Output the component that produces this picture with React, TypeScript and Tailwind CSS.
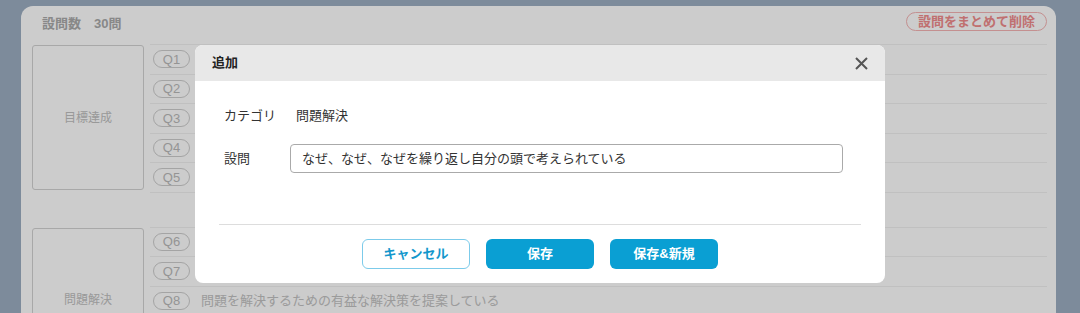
import React from 'react';

type Question = { no: string; text: string };
type Group = { category: string; questions: Question[] };

const groups: Group[] = [
  {
    category: '目標達成',
    questions: [
      { no: 'Q1', text: '目標を明確にし、達成までの計画を立てている' },
      { no: 'Q2', text: '目標達成のために必要な行動を継続している' },
      { no: 'Q3', text: '困難な状況でも最後までやり抜いている' },
      { no: 'Q4', text: '進捗を定期的に確認し、計画を修正している' },
      { no: 'Q5', text: '高い目標に対して主体的に取り組んでいる' },
    ],
  },
  {
    category: '問題解決',
    questions: [
      { no: 'Q6', text: '問題の本質を捉えて原因を分析している' },
      { no: 'Q7', text: 'なぜ、なぜ、なぜを繰り返し自分の頭で考えている' },
      { no: 'Q8', text: '問題を解決するための有益な解決策を提案している' },
      { no: 'Q9', text: '解決策を実行し、その結果を検証している' },
      { no: 'Q10', text: '関係者を巻き込みながら問題解決を進めている' },
    ],
  },
];

const font = "font-['Liberation_Sans','Noto_Sans_CJK_JP',sans-serif]";

const QuestionGroup: React.FC<{ group: Group }> = ({ group }) => (
  <div className="flex">
    <div className="mt-[1px] flex h-[145px] w-[112px] shrink-0 items-center justify-center rounded-[3px] border border-[#d2d2d2] text-[12px] text-[#c0c0c0]">
      {group.category}
    </div>
    <div className="ml-[6px] flex-1 border-t border-[#f0f0f0]">
      {group.questions.map((q) => (
        <div key={q.no} className="flex h-[29.5px] items-center border-b border-[#f0f0f0]">
          <span className="ml-[3px] flex h-[18px] w-[37px] shrink-0 items-center justify-center rounded-full border border-[#cecece] text-[13px] leading-none text-[#bababa]">
            {q.no}
          </span>
          <span className="ml-[11px] text-[13px] text-[#c2c2c2]">{q.text}</span>
        </div>
      ))}
    </div>
  </div>
);

const CloseIcon = () => (
  <svg width="13" height="13" viewBox="0 0 13 13" fill="none" stroke="#555" strokeWidth={2}>
    <path d="M1 1 L12 12 M12 1 L1 12" />
  </svg>
);

const AddModal: React.FC = () => (
  <div className="absolute inset-0 flex justify-center bg-black/20 pt-[45px]">
    <div className="h-[238px] w-[690px] overflow-hidden rounded-[8px] bg-white">
      <div className="flex h-[36px] items-center justify-between bg-[#e8e8e8] pl-[17px] pr-[17px]">
        <span className="text-[13px] font-bold text-[#222]">追加</span>
        <CloseIcon />
      </div>
      <div className="h-[143px] pl-[29px] pr-[42px] pt-[20px] text-[13px] text-[#333]">
        <div className="flex h-[30px] items-center">
          <span className="w-[66px]">カテゴリ</span>
          <span className="pl-[6px]">問題解決</span>
        </div>
        <div className="mt-[13px] flex items-center">
          <span className="w-[66px] shrink-0">設問</span>
          <div className="flex h-[29px] flex-1 items-center rounded-[4px] border border-[#aaa] px-[11px]">
            なぜ、なぜ、なぜを繰り返し自分の頭で考えられている
          </div>
        </div>
      </div>
      <div className="mx-[24px] border-t border-[#ddd]" />
      <div className="flex justify-center gap-[16px] pt-[14px]">
        <button className="h-[30px] w-[108px] rounded-[6px] border border-[#7ccbea] bg-white text-[13px] font-bold text-[#1497cc]">
          キャンセル
        </button>
        <button className="h-[30px] w-[108px] rounded-[6px] bg-[#0a9fd3] text-[13px] font-bold text-white">
          保存
        </button>
        <button className="h-[30px] w-[108px] rounded-[6px] bg-[#0a9fd3] text-[13px] font-bold text-white">
          保存&新規
        </button>
      </div>
    </div>
  </div>
);

export default function App() {
  return (
    <div className={`relative h-[313px] overflow-hidden bg-[#9daec2] pl-[21px] pr-[24px] pt-[6px] ${font}`}>
      <div className="h-full rounded-t-[12px] bg-white pl-[11px] pr-[9px]">
        <div className="flex h-[38px] items-start justify-between pt-[6px]">
          <span className="ml-[10px] mt-[2px] text-[13px] font-bold text-[#aaa]">設問数　30問</span>
          <button className="h-[19px] rounded-full border border-[#f5b4b4] px-[11px] text-[13px] font-bold leading-none text-[#f08c8c]">
            設問をまとめて削除
          </button>
        </div>
        <div className="flex flex-col gap-[34px]">
          {groups.map((g) => (
            <QuestionGroup key={g.category} group={g} />
          ))}
        </div>
      </div>
      <AddModal />
    </div>
  );
}
